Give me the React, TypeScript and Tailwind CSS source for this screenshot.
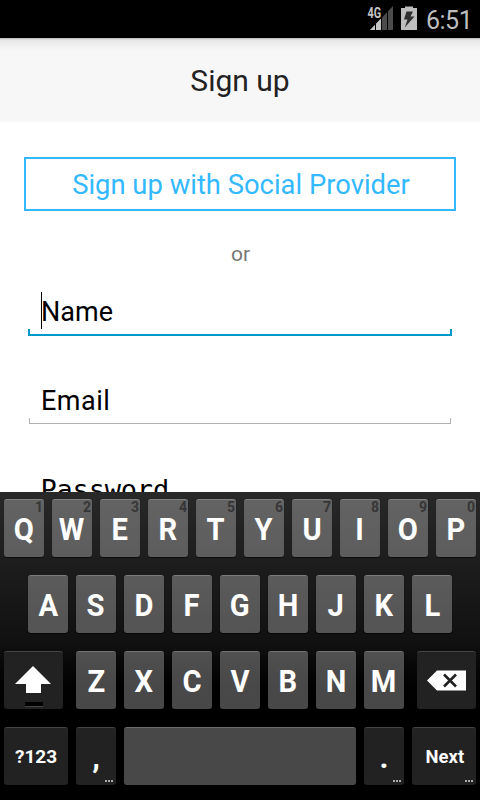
import type { ReactNode } from "react";

const keyBase = "relative flex h-[58px] shrink-0 items-center justify-center rounded-[3px] border-t text-white font-bold";
const lightKey = "border-white/20 bg-[#f0f0f0]/30 shadow-[0_1px_1px_rgba(0,0,0,0.6)]";
const darkKey = "border-[#444] bg-[#222]";

function LetterKey({ label, hint }: { label: string; hint?: string }) {
  return (
    <button className={`${keyBase} ${lightKey} w-10 text-[31px]`}>
      <span className="relative top-[1.5px] scale-x-94">{label}</span>
      {hint && <span className="absolute top-[-1px] right-px text-[14px] leading-[16px] font-bold text-[#363636]">{hint}</span>}
    </button>
  );
}

function Dots() {
  return (
    <span className="absolute right-[3px] bottom-[3px] flex gap-px">
      <i className="size-[2px] bg-[#aaa]" />
      <i className="size-[2px] bg-[#aaa]" />
      <i className="size-[2px] bg-[#aaa]" />
    </span>
  );
}

function Row({ children, className = "" }: { children: ReactNode; className?: string }) {
  return <div className={`flex gap-2 ${className}`}>{children}</div>;
}

function StatusBar() {
  return (
    <header className="flex h-[38px] shrink-0 bg-black pl-[366px] text-[#bebebe]">
      <svg width="60" height="38" viewBox="0 0 60 38">
        <path d="M4 30L27 6V30Z" fill="#4b4b4b" />
        <path d="M4 30L15.5 18V30Z" fill="#c5c5c5" />
        <path d="M9.5 21V30M15.5 16V30M21.5 10V30" stroke="#000" strokeWidth="1" />
        <text x="1.6" y="17.5" fill="#c5c5c5" stroke="#000" strokeWidth="1" paintOrder="stroke" fontFamily="Roboto" fontWeight="700" fontSize="14.5" textLength="13.6" lengthAdjust="spacingAndGlyphs">4G</text>
        <path d="M35 8H39V6.5H47V8H51V30H35Z" fill="#bebebe" />
        <path d="M40.5 11.5H47L44.5 16.5H48.5L38.8 27.5L41.5 19.5H38Z" fill="#303030" />
      </svg>
      <time className="text-[25px] leading-[41px] tracking-[-0.5px]">6:51</time>
    </header>
  );
}

export default function App() {
  return (
    <div className="flex h-[800px] w-[480px] flex-col overflow-hidden bg-white font-['Roboto',sans-serif]">
      <StatusBar />
      <main className="h-[454px] shrink-0 overflow-hidden">
        <h1 className="h-[84px] bg-[#f7f7f7] bg-[linear-gradient(#b8b8b8_0px,#e6e6e6_2px,#eee_6px,#f7f7f7_13px)] text-center text-[30px] leading-[85px] text-[#222]">Sign up</h1>
        <div className="px-6 pt-[35px]">
          <button className="block h-[54px] w-full border-2 border-[#33b9ff] pl-[2px] text-[27.4px] leading-[52px] text-[#33b9ff]">Sign up with Social Provider</button>
          <p className="mt-[29px] h-7 pl-px text-center text-[21px] leading-7 text-[#777]">or</p>
        </div>
        <form className="px-7">
          <div className="mt-[24px] flex h-[37px] pl-[13px]">
            <i className="w-px bg-black" />
            <label className="-ml-px text-[27px] leading-[41px] text-black">Name</label>
          </div>
          <div className="h-[7px] border-x-2 border-b-2 border-[#0099cc] [border-image:linear-gradient(#0099cc,#0099cc)_1]" />
          <label className="mt-[45px] block h-[37px] pl-[13px] text-[27px] leading-[41px] tracking-[0.5px] text-black">Email</label>
          <div className="mx-px h-[6px] border-x border-b border-[#b0b0b0]" />
          <label className="mt-[46px] block pl-[12.5px] font-['DejaVu_Sans_Mono',monospace] text-[27px] leading-[40px] tracking-[-0.2px] text-black">Password</label>
        </form>
      </main>
      <section className="flex h-[308px] shrink-0 flex-col gap-[18px] bg-linear-to-b from-[#292929] via-[#101010] via-50% to-black to-75% px-1 pt-[7px]">
        <Row>
          {Array.from("QWERTYUIOP").map((c, i) => <LetterKey key={c} label={c} hint={String((i + 1) % 10)} />)}
        </Row>
        <Row className="pl-6">
          {Array.from("ASDFGHJKL").map((c) => <LetterKey key={c} label={c} />)}
        </Row>
        <Row>
          <button className={`${keyBase} ${darkKey} mr-[5px] w-[59px]`}>
            <svg width="59" height="57" viewBox="0 0 59 57">
              <path d="M29 14L47 32H37V41H22V32H11Z" fill="#fff" />
              <path d="M21 50H39V54H21Z" fill="#000" />
              <path d="M21 54.5H39" stroke="#444" />
            </svg>
          </button>
          {Array.from("ZXCVBNM").map((c) => <LetterKey key={c} label={c} />)}
          <button className={`${keyBase} ${darkKey} ml-[5px] w-[59px]`}>
            <svg width="59" height="57" viewBox="0 0 59 57">
              <path d="M10 28.5L20 18.5H49V38.5H20Z" fill="#fff" />
              <path d="M27 22.5L39 34.5M39 22.5L27 34.5" stroke="#222" strokeWidth="2.6" />
            </svg>
          </button>
        </Row>
        <Row>
          <button className={`${keyBase} ${darkKey} w-16 text-[19px]`}><span className="relative top-px">?123</span></button>
          <button className={`${keyBase} ${darkKey} w-10 text-[31px]`}><span className="relative top-[2px]">,</span><Dots /></button>
          <button aria-label="Space" className={`${keyBase} ${lightKey} w-[232px]`} />
          <button className={`${keyBase} ${darkKey} w-10 text-[31px]`}><span className="relative top-[2px]">.</span><Dots /></button>
          <button className={`${keyBase} ${darkKey} w-16 text-[19px]`}><span className="relative top-px left-px scale-x-97">Next</span><Dots /></button>
        </Row>
      </section>
    </div>
  );
}
